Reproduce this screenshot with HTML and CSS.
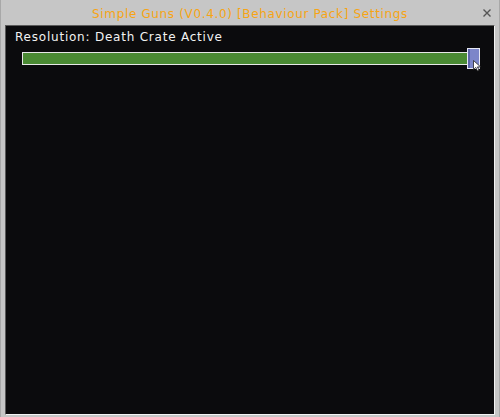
FILE: index.html
```html
<!DOCTYPE html>
<html>
<head>
<meta charset="utf-8">
<link rel="stylesheet" href="styles.css">
</head>
<body>
<div class="window">
  <div class="titlebar">
    <span class="title">Simple Guns (V0.4.0) [Behaviour Pack] Settings</span>
    <span class="close">
      <svg width="8" height="8" viewBox="0 0 8 8"><path d="M0.5 0.5 L7.5 7.5 M7.5 0.5 L0.5 7.5" stroke="#555" stroke-width="1.4"/></svg>
    </span>
  </div>
  <div class="panel">
    <div class="label">Resolution: Death Crate Active</div>
    <div class="slider">
      <div class="track"></div>
      <div class="thumb">
        <svg class="cursor" width="9" height="12" viewBox="0 0 9 12"><path d="M0.5 0.5 L0.5 9.5 L2.8 7.4 L4.5 11 L6 10.3 L4.4 6.9 L7.6 6.9 Z" fill="#fff" stroke="#222" stroke-width="0.8"/></svg>
      </div>
    </div>
  </div>
</div>
</body>
</html>
```
FILE: styles.css
```css
html, body {
  margin: 0;
  padding: 0;
  width: 500px;
  height: 417px;
  overflow: hidden;
}
.window {
  box-sizing: border-box;
  width: 500px;
  height: 417px;
  background: #c6c6c6;
  border-left: 1px solid #a8a8a8;
  border-right: 1px solid #a8a8a8;
  padding: 0 4px 2px 4px;
  display: flex;
  flex-direction: column;
}
.titlebar {
  height: 25px;
  display: flex;
  align-items: center;
  justify-content: center;
  position: relative;
  flex: none;
}
.title {
  font-family: "DejaVu Sans", sans-serif;
  font-size: 12px;
  color: #f7a414;
  letter-spacing: 0.65px;
  margin-top: 2px;
}
.close {
  position: absolute;
  right: 4px;
  top: 9px;
  display: flex;
}
.panel {
  flex: 1;
  background: #0b0b0d;
  border-top: 1px solid #5a5a5a;
  border-left: 1px solid #5a5a5a;
  border-bottom: 1px solid #f4f4f4;
  border-right: 1px solid #f4f4f4;
  padding: 4px 0 0 9px;
}
.label {
  font-family: "DejaVu Sans", sans-serif;
  font-size: 12px;
  color: #f2f2f2;
  letter-spacing: 0.78px;
  line-height: 15px;
}
.slider {
  display: flex;
  align-items: center;
  margin: 2px 0 0 7px;
  width: 458px;
  height: 22px;
}
.track {
  flex: 1;
  height: 11px;
  background: #4a8a33;
  border: 1px solid #e8e8e8;
}
.thumb {
  position: relative;
  box-sizing: border-box;
  width: 13px;
  height: 21px;
  background: #7c86c9;
  border: 1px solid #e6e8f4;
  box-shadow: inset 2px 0 0 #5b64a8;
  margin-left: -1px;
}
.cursor {
  position: absolute;
  left: 5px;
  top: 11px;
}
```
